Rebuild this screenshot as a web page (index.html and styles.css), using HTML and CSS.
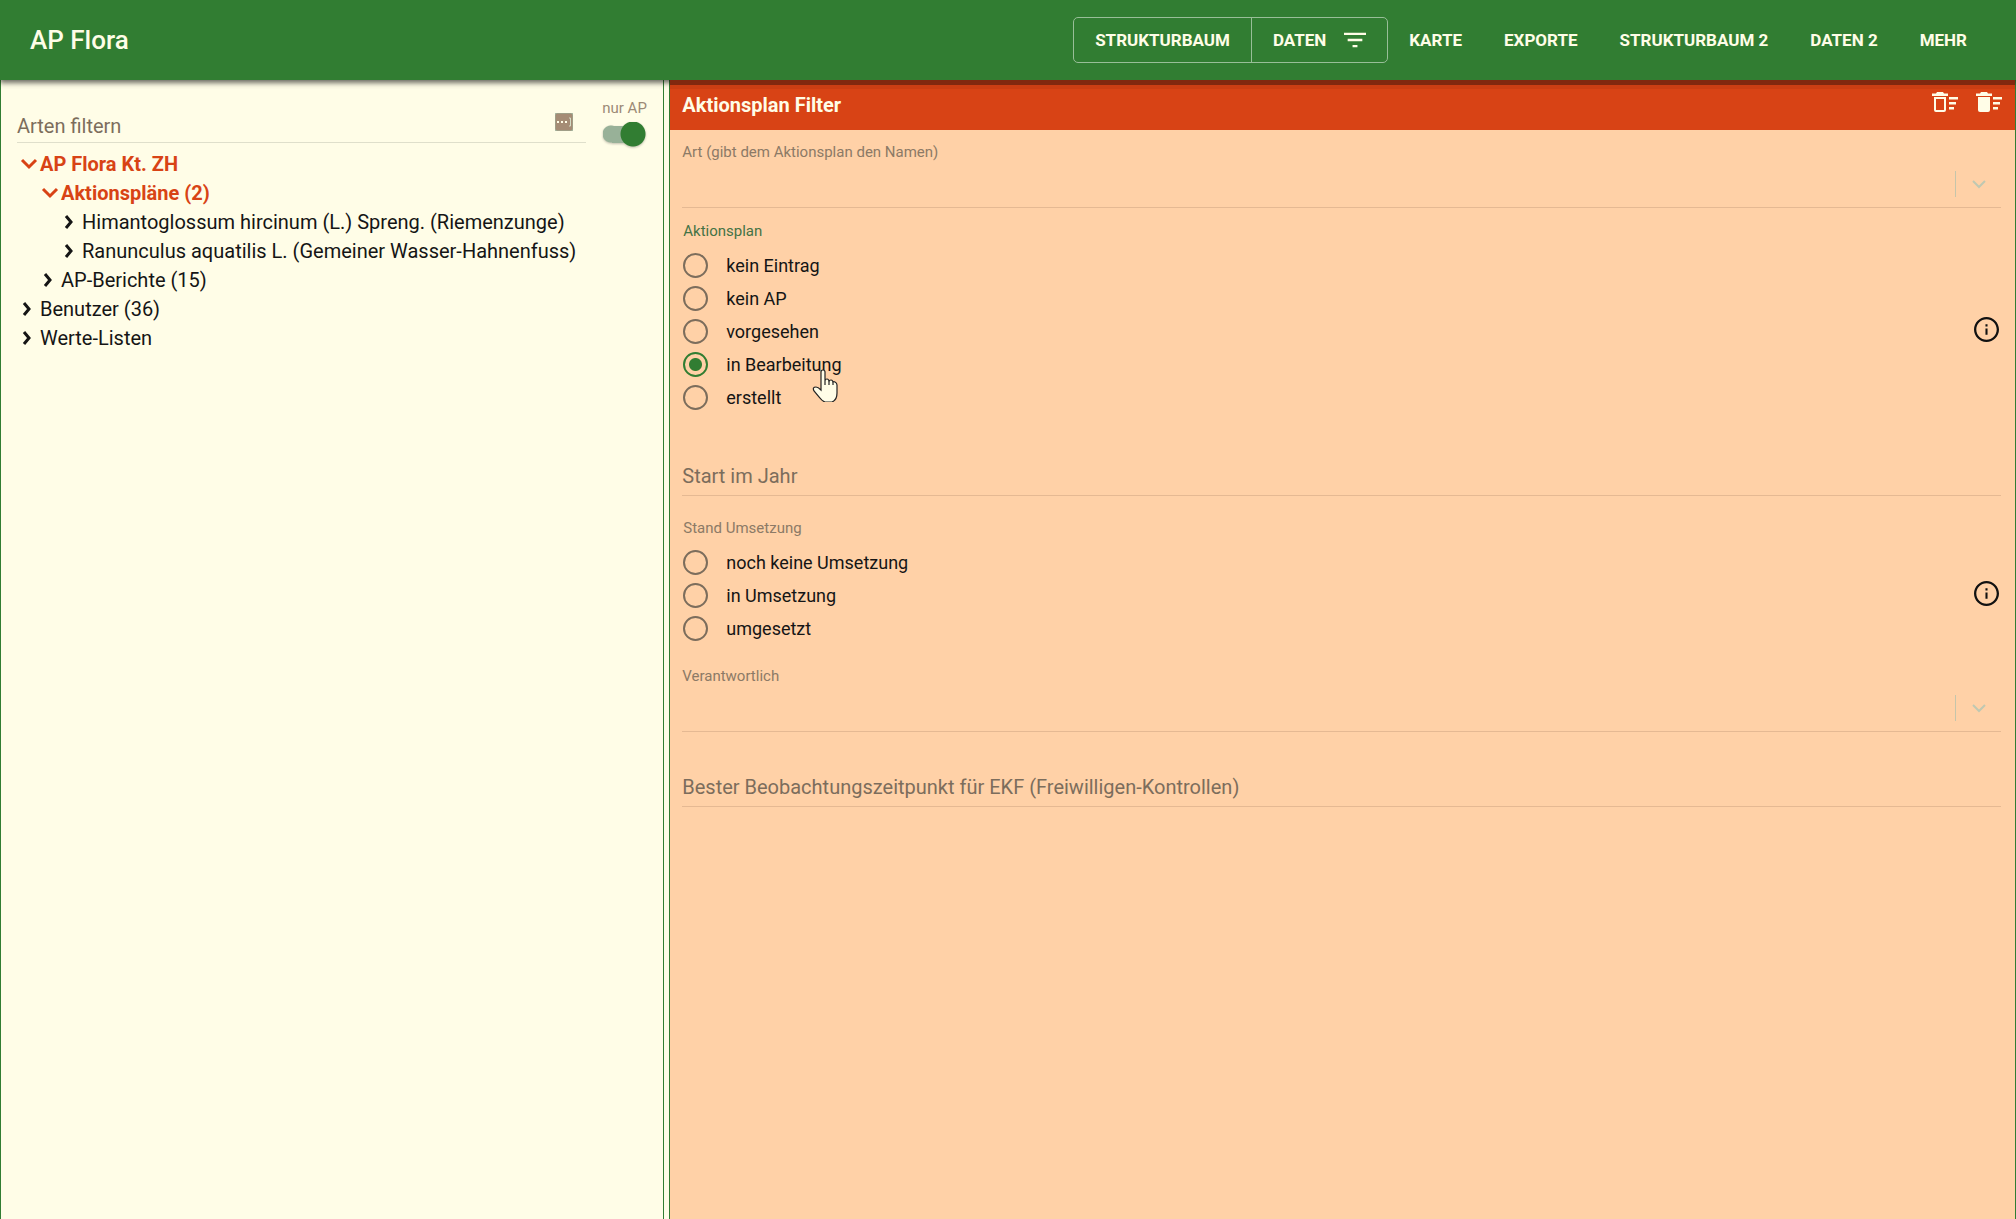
FILE: index.html
```html
<!DOCTYPE html>
<html lang="de">
<head>
<meta charset="utf-8">
<meta name="viewport" content="width=device-width, initial-scale=1">
<title>AP Flora</title>
<link rel="stylesheet" href="styles.css">
</head>
<body>
<header class="appbar">
  <h1 class="brand">AP Flora</h1>
  <nav class="nav">
    <div class="nav-group">
      <button class="nav-btn" type="button">STRUKTURBAUM</button>
      <button class="nav-btn nav-btn-filter" type="button">DATEN
        <svg class="icon-filter" viewBox="3 6 18 12" aria-hidden="true"><path d="M10 18h4v-2h-4v2zM3 6v2h18V6H3zm3 7h12v-2H6v2z"/></svg>
      </button>
    </div>
    <button class="nav-btn" type="button">KARTE</button>
    <button class="nav-btn" type="button">EXPORTE</button>
    <button class="nav-btn" type="button">STRUKTURBAUM 2</button>
    <button class="nav-btn" type="button">DATEN 2</button>
    <button class="nav-btn" type="button">MEHR</button>
  </nav>
</header>
<main class="panes">
  <section class="tree-pane">
    <div class="tree-filter">
      <div class="search">
        <input class="search-input" id="tree-search" type="text" placeholder=" ">
        <label class="floating-label" for="tree-search">Arten filtern</label>
        <svg class="icon-more" viewBox="0 0 18 18" aria-hidden="true"><rect class="box" width="18" height="18" rx="2"/><path class="dots" d="M2 8h2v2H2zM6 8h2v2H6zM10 8h2v2h-2z"/><path class="caret" d="M14 5h1.500v8H14"/></svg>
      </div>
      <label class="switch">
        <span class="switch-label">nur AP</span>
        <input class="switch-input" type="checkbox" checked>
      </label>
    </div>
    <ul class="tree">
      <li><a class="node active" href="#"><svg class="chev" viewBox="0 0 20 20"><path d="M2 6l7 7 7-7"/></svg>AP Flora Kt. ZH</a>
        <ul class="branch">
          <li><a class="node active" href="#"><svg class="chev" viewBox="0 0 20 20"><path d="M2 6l7 7 7-7"/></svg>Aktionspläne (2)</a>
            <ul class="branch">
              <li><a class="node" href="#"><svg class="chev" viewBox="0 0 20 20"><path d="M4 4l5 6-5 6"/></svg>Himantoglossum hircinum (L.) Spreng. (Riemenzunge)</a></li>
              <li><a class="node" href="#"><svg class="chev" viewBox="0 0 20 20"><path d="M4 4l5 6-5 6"/></svg>Ranunculus aquatilis L. (Gemeiner Wasser-Hahnenfuss)</a></li>
            </ul>
          </li>
          <li><a class="node" href="#"><svg class="chev" viewBox="0 0 20 20"><path d="M4 4l5 6-5 6"/></svg>AP-Berichte (15)</a></li>
        </ul>
      </li>
      <li><a class="node" href="#"><svg class="chev" viewBox="0 0 20 20"><path d="M4 4l5 6-5 6"/></svg>Benutzer (36)</a></li>
      <li><a class="node" href="#"><svg class="chev" viewBox="0 0 20 20"><path d="M4 4l5 6-5 6"/></svg>Werte-Listen</a></li>
    </ul>
  </section>
  <section class="form-pane">
    <header class="form-head">
      <h2 class="form-title">Aktionsplan Filter</h2>
      <div class="form-tools">
        <button class="tool" type="button" aria-label="Filter leeren"><svg viewBox="0 0 26 20"><path d="M5 0h6l1 1.500h4V4H0V1.500h4z"/><path fill-rule="evenodd" d="M2 5h12v13q0 2-2 2H4q-2 0-2-2zm2 2v11h8V7z"/><path d="M17 5h9v2.500h-9zM17 10h7v2.500h-7zM17 15h5v2.500h-5z"/></svg></button>
        <button class="tool" type="button" aria-label="Alle Filter leeren"><svg viewBox="0 0 26 20"><path d="M5 0h6l1 1.500h4V4H0V1.500h4z"/><path d="M2 5h12v13q0 2-2 2H4q-2 0-2-2z"/><path d="M17 5h9v2.500h-9zM17 10h7v2.500h-7zM17 15h5v2.500h-5z"/></svg></button>
      </div>
    </header>
    <form class="form">
      <div class="select-field">
        <label class="caption" for="art">Art (gibt dem Aktionsplan den Namen)</label>
        <div class="select-row">
          <select class="select" id="art"><option></option></select>
          <svg class="select-chev" viewBox="0 0 14 9" aria-hidden="true"><path d="M1 1l6 6 6-6"/></svg>
        </div>
      </div>
      <div class="radio-row radio-row-first">
        <fieldset class="radios">
          <legend class="caption focused">Aktionsplan</legend>
          <label class="radio"><input type="radio" name="bearb">kein Eintrag</label>
          <label class="radio"><input type="radio" name="bearb">kein AP</label>
          <label class="radio"><input type="radio" name="bearb">vorgesehen</label>
          <label class="radio"><input type="radio" name="bearb" checked>in Bearbeitung
            <svg class="pointer" viewBox="0 0 26 33" aria-hidden="true"><path d="M9 19V3q0-2 2-2t2 2v9q0-2 2-2t2 3q0-2 2-2t2 3q0-2 2-1t2 3v8q0 7-5 9h-7q-3-1-5-4l-6-7q-2-4 2-4 2 0 5 3zM13 12v4M17 12v4M21 13v3"/></svg>
          </label>
          <label class="radio"><input type="radio" name="bearb">erstellt</label>
        </fieldset>
        <button class="info" type="button" aria-label="Info"><svg viewBox="0 0 24 24"><path d="M11 7h2v2h-2zm0 4h2v6h-2zm1-11C5.400 0 0 5.400 0 12s5.400 12 12 12 12-5.400 12-12S18.600 0 12 0zm0 21.800c-5.400 0-9.800-4.400-9.800-9.800S6.600 2.200 12 2.200s9.800 4.400 9.800 9.800-4.400 9.800-9.800 9.800z"/></svg></button>
      </div>
      <div class="text-field">
        <input class="text-input" id="start" type="text" placeholder=" ">
        <label class="floating-label" for="start">Start im Jahr</label>
      </div>
      <div class="radio-row radio-row-second">
        <fieldset class="radios">
          <legend class="caption">Stand Umsetzung</legend>
          <label class="radio"><input type="radio" name="umsetzung">noch keine Umsetzung</label>
          <label class="radio"><input type="radio" name="umsetzung">in Umsetzung</label>
          <label class="radio"><input type="radio" name="umsetzung">umgesetzt</label>
        </fieldset>
        <button class="info" type="button" aria-label="Info"><svg viewBox="0 0 24 24"><path d="M11 7h2v2h-2zm0 4h2v6h-2zm1-11C5.400 0 0 5.400 0 12s5.400 12 12 12 12-5.400 12-12S18.600 0 12 0zm0 21.800c-5.400 0-9.800-4.400-9.800-9.800S6.600 2.200 12 2.200s9.800 4.400 9.800 9.800-4.400 9.800-9.800 9.800z"/></svg></button>
      </div>
      <div class="select-field">
        <label class="caption" for="verantwortlich">Verantwortlich</label>
        <div class="select-row">
          <select class="select" id="verantwortlich"><option></option></select>
          <svg class="select-chev" viewBox="0 0 14 9" aria-hidden="true"><path d="M1 1l6 6 6-6"/></svg>
        </div>
      </div>
      <div class="text-field text-field-last">
        <input class="text-input" id="ekf" type="text" placeholder=" ">
        <label class="floating-label" for="ekf">Bester Beobachtungszeitpunkt für EKF (Freiwilligen-Kontrollen)</label>
      </div>
    </form>
  </section>
</main>
</body>
</html>
```
FILE: styles.css
```css
:root {
  --green: #317d32;
  --cream: #fffde7;
  --orange: #d84315;
  --peach: #ffd1a7;
  --muted: #7c6d5c;
  --line: #e5b993;
}

* { box-sizing: border-box; }

body {
  margin: 0;
  min-height: 100vh;
  display: flex;
  flex-direction: column;
  background: var(--cream);
  color: #151515;
  font-family: Roboto, "Liberation Sans", sans-serif;
  font-size: 20px;
}

button, input, select { font: inherit; color: inherit; }
button { border: 0; background: none; padding: 0; cursor: pointer; }

/* App bar */
.appbar {
  position: relative;
  z-index: 1;
  display: flex;
  align-items: center;
  justify-content: space-between;
  height: 80px;
  padding: 0 28px 0 30px;
  background: var(--green);
  color: var(--cream);
  box-shadow: 0 2px 5px rgba(0, 0, 0, .5), 0 4px 5px rgba(0, 0, 0, .2);
}
.brand { margin: 0; font-size: 26px; font-weight: 500; }
.nav { display: flex; align-items: center; }
.nav-group { display: flex; border: 1px solid #98be98; border-radius: 5px; }
.nav-group .nav-btn + .nav-btn { border-left: 1px solid #98be98; }
.nav-btn {
  display: flex;
  align-items: center;
  height: 44px;
  padding: 0 21px;
  font-size: 17px;
  font-weight: 700;
  white-space: nowrap;
}
.nav-btn-filter { gap: 18px; }
.icon-filter { width: 22px; height: 16px; fill: currentColor; }

/* Panes */
.panes {
  flex: 1;
  display: grid;
  grid-template-columns: calc(33% - 1px) 1fr;
  gap: 5px;
}
.tree-pane { border: solid var(--green); border-width: 0 1px; padding: 17px 16px; }
.form-pane { border: solid var(--green); border-width: 0 1px; background: var(--peach); }

/* Tree filter */
.tree-filter { display: flex; align-items: flex-start; gap: 16px; height: 52px; }
.search {
  flex: 1;
  display: grid;
  grid-template-columns: 1fr 31px;
  align-items: center;
  height: 46px;
  border-bottom: 1px solid #dfdfcb;
}
.search-input, .search .floating-label { grid-area: 1 / 1; }
.search-input { height: 45px; min-width: 0; padding: 12px 0 0; border: 0; outline: 0; background: none; }
.floating-label { color: var(--muted); pointer-events: none; }
input:not(:placeholder-shown) + .floating-label { visibility: hidden; }
.search .floating-label { padding-top: 12px; }
.icon-more { width: 18px; height: 18px; margin-top: 5px; }
.icon-more .box { fill: #a58c75; stroke: #9ab09a; }
.icon-more .dots { fill: var(--cream); }
.icon-more .caret { fill: none; stroke: #d5dcc5; }

.switch { display: flex; flex-direction: column; width: 45px; white-space: nowrap; }
.switch-label { font-size: 15px; line-height: 22px; color: #9c8a76; }
.switch-input {
  appearance: none;
  width: 43px;
  height: 25px;
  margin: 3px 0 0 1px;
  background:
    radial-gradient(circle at 30px 12px, var(--green) 12px, transparent 13px),
    linear-gradient(#98b198, #98b198) 9px 4px / 24px 17px no-repeat,
    radial-gradient(circle at 8px 12px, #98b198 8px, transparent 9px);
  filter: drop-shadow(0 1px 1px rgba(0, 0, 0, .25));
}

/* Tree */
.tree, .branch { list-style: none; margin: 0; padding: 0; }
.tree { padding-left: 3px; }
.branch { padding-left: 21px; }
.node {
  display: flex;
  align-items: center;
  height: 29px;
  color: inherit;
  text-decoration: none;
  white-space: nowrap;
}
.node.active { color: var(--orange); font-weight: 700; }
.chev { width: 20px; height: 20px; fill: none; stroke: currentColor; stroke-width: 3; }

/* Form pane */
.form-head {
  position: relative;
  z-index: 2;
  display: flex;
  align-items: center;
  justify-content: space-between;
  height: 50px;
  padding: 0 13px 5px 12px;
  border-top: 5px solid #82280f;
  background: var(--orange);
  box-shadow: inset 0 4px 0 #cc3e13;
  color: var(--cream);
}
.form-title { margin: 0; font-size: 20px; font-weight: 700; }
.form-tools { display: flex; gap: 18px; padding-bottom: 6px; }
.tool svg { display: block; width: 26px; height: 20px; fill: currentColor; }
.form { padding: 12px 14px 0 12px; }

.caption { padding: 0; font-size: 15px; line-height: 20px; color: #8c7a66; }
.caption.focused { color: #447345; }

.select-field { display: flex; flex-direction: column; }
.select-row {
  display: grid;
  grid-template-columns: 1fr 45px;
  align-items: center;
  height: 46px;
  border-bottom: 1px solid var(--line);
}
.select {
  grid-area: 1 / 1 / 2 / 3;
  appearance: none;
  height: 45px;
  border: 0;
  outline: 0;
  background: linear-gradient(#c5c5ab, #c5c5ab) right 45px top 9px / 1px 26px no-repeat;
}
.select-chev {
  grid-area: 1 / 2;
  width: 14px;
  height: 9px;
  margin-left: 16px;
  fill: none;
  stroke: #bfc8b2;
  stroke-width: 2;
  pointer-events: none;
}

.radio-row { display: flex; align-items: center; justify-content: space-between; }
.radio-row-first { padding: 13px 0 42px; }
.radio-row-second { padding: 22px 0 21px; }
.radios { display: flex; flex-direction: column; margin: 0; padding: 0 0 0 1px; border: 0; }
.radios legend { margin-bottom: 8px; }
.radio { position: relative; display: flex; align-items: center; gap: 18px; height: 33px; font-size: 18px; }
.radio input {
  appearance: none;
  width: 25px;
  height: 25px;
  margin: 0;
  border: 2px solid var(--muted);
  border-radius: 50%;
}
.radio input:checked {
  border-color: var(--green);
  background: radial-gradient(circle, var(--green) 6px, transparent 7px);
}
.pointer {
  position: absolute;
  left: 129px;
  top: 21px;
  z-index: 1;
  width: 26px;
  height: 33px;
  fill: var(--cream);
  stroke: #222;
  stroke-width: 1.200;
}
.info { margin: 24px 2px 0 0; }
.info svg { display: block; width: 25px; height: 25px; fill: #111; }

.text-field { display: grid; height: 40px; border-bottom: 1px solid var(--line); }
.text-input, .text-field .floating-label { grid-area: 1 / 1; align-self: center; }
.text-input { width: 100%; height: 39px; padding: 0; border: 0; outline: 0; background: none; }
.text-field-last { margin-top: 35px; }
```
